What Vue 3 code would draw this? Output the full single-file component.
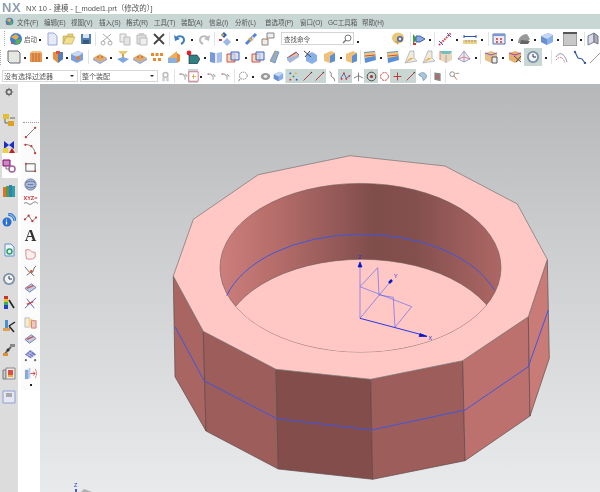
<script setup>
const menus = [
  ['文件(F)', 27], ['编辑(E)', 27], ['视图(V)', 28], ['插入(S)', 27], ['格式(R)', 28],
  ['工具(T)', 27], ['装配(A)', 28], ['信息(I)', 26], ['分析(L)', 30], ['首选项(P)', 35],
  ['窗口(O)', 28], ['GC工具箱', 34], ['帮助(H)', 30],
]

// i = icon id, w = slot width, d = dropdown dot after, s = separator, on = highlighted
const row1a = [
  { i: 'new', w: 17 }, { i: 'open', w: 17 }, { i: 'save', w: 17 }, { s: 1, w: 3 },
  { i: 'cut', w: 19 }, { i: 'copy', w: 17 }, { i: 'paste', w: 17 }, { i: 'x', w: 17 }, { s: 1, w: 5 },
  { i: 'undo', w: 15 }, { d: 1, w: 9 }, { i: 'redo', w: 15 }, { s: 1, w: 6 },
  { i: 'snap', w: 15 }, { d: 1, w: 10 }, { i: 'wrench', w: 17 }, { i: 'boxes', w: 17 },
]
const row1b = [
  { i: 'palette', w: 20 }, { s: 1, w: 3 }, { i: 'play', w: 14 }, { d: 1, w: 7 }, { s: 1, w: 3 },
  { i: 'spring', w: 17 }, { d: 1, w: 8 }, { i: 'ruler', w: 17 }, { d: 1, w: 8 }, { s: 1, w: 4 },
  { i: 'win', w: 18 }, { d: 1, w: 7 }, { i: 'shell', w: 17 }, { d: 1, w: 6 }, { i: 'cube', w: 17 }, { d: 1, w: 6 },
  { i: 'panel', w: 17 }, { d: 1, w: 5 }, { s: 1, w: 3 }, { i: 'cube2', w: 14 },
]
const row2 = [
  { i: 'plane', w: 17 }, { d: 1, w: 6 }, { i: 'block', w: 16 }, { d: 1, w: 6 }, { i: 'cyl', w: 16 }, { d: 1, w: 2 },
  { i: 'cube3', w: 18 }, { s: 1, w: 5 }, { i: 'plate', w: 17 }, { d: 1, w: 6 }, { i: 'pad', w: 17 },
  { i: 'plate', w: 17 }, { i: 'dots', w: 17 }, { i: 'wedge', w: 18 }, { i: 'teal', w: 19 }, { d: 1, w: 5 },
  { i: 'book', w: 17 }, { i: 'frame', w: 18 }, { d: 1, w: 7 }, { i: 'frame', w: 17 }, { i: 'curl', w: 17 },
  { i: 'plate2', w: 19 }, { i: 'cubex', w: 18 }, { i: 'orbox', w: 18 }, { d: 1, w: 5 }, { i: 'orbox', w: 15 }, { s: 1, w: 4 },
  { i: 'tray', w: 16 }, { d: 1, w: 6 }, { i: 'tray', w: 17 }, { i: 'fold', w: 18 }, { i: 'fold', w: 18 }, { i: 'prism', w: 18 },
  { i: 'cone', w: 18 }, { d: 1, w: 6 }, { s: 1, w: 3 }, { i: 'cage', w: 17 }, { d: 1, w: 7 }, { i: 'cage2', w: 18 },
  { i: 'clock', w: 18, on: 1 }, { d: 1, w: 7 }, { s: 1, w: 4 }, { i: 'arc', w: 18 }, { i: 'chain', w: 18 }, { i: 'line', w: 14 },
]
const row3 = [
  { i: 'gear2', w: 10 }, { s: 1, w: 8 }, { i: 'ptr', w: 10 }, { i: 'selbox', w: 10, on: 1 }, { d: 1, w: 6 }, { i: 'ptr', w: 14 }, { i: 'ptr', w: 14 }, { s: 1, w: 4 },
  { i: 'lasso', w: 12 }, { d: 1, w: 10 }, { i: 'disc', w: 14 }, { i: 'cube', w: 12 }, { s: 1, w: 2 },
  { i: 'mesh', w: 15, on: 1 }, { i: 'redline', w: 12, on: 1 }, { i: 'redline', w: 13, on: 1 }, { i: 'wave', w: 12 },
  { i: 'zig', w: 14, on: 1 }, { i: 'tee', w: 12 }, { i: 'target', w: 14, on: 1 }, { i: 'ring', w: 12 },
  { i: 'plus', w: 14, on: 1 }, { i: 'redline', w: 12, on: 1 }, { i: 'blob', w: 13 }, { s: 1, w: 2 },
  { i: 'book2', w: 13 }, { s: 1, w: 3 }, { i: 'key', w: 14 },
]

const tabs = [
  { i: 'gear', h: 16 }, { i: 'tree', h: 40 }, { i: 'bow', h: 13 }, { i: 'parts', h: 25, on: 1 },
  { i: 'books', h: 26 }, { i: 'wifi', h: 32 }, { i: 'doc', h: 28 }, { i: 'clock', h: 30 },
  { i: 'rainbow', h: 18 }, { i: 'bluek', h: 28 }, { i: 'robot', h: 20 }, { i: 'album', h: 28 }, { i: 'disk', h: 18 },
]
const tools = [
  { i: 'rline', h: 12 }, { i: 'rarc', h: 20 }, { i: 'rrect', h: 18 }, { i: 'coil', h: 16 }, { i: 'xyz', h: 18 },
  { i: 'zigr', h: 14 }, { t: 'A', h: 24 }, { i: 'heart', h: 10 }, { i: 'knot', h: 24 }, { i: 'pl1', h: 10 },
  { i: 'pl2', h: 22 }, { i: 'pl3', h: 16 }, { i: 'pl1', h: 16 }, { i: 'gridp', h: 18 }, { i: 'pull', h: 18 },
]

const top = '350,155.7 445,166 517.3,204 547.3,259.3 528.3,316.7 462.7,360.7 370.7,379.3 276,369.3 203.3,331.3 173.3,276 193.3,219.3 258.3,174.7'
const faces = [
  { p: '173.3,276 203.3,331.3 206,431 175,376.7', c: '#a96562' },
  { p: '203.3,331.3 276,369.3 278.3,469 206,431', c: '#9c5d5b' },
  { p: '276,369.3 370.7,379.3 372.7,479.3 278.3,469', c: '#824d4b' },
  { p: '370.7,379.3 462.7,360.7 465,460.7 372.7,479.3', c: '#9c5d5b' },
  { p: '462.7,360.7 528.3,316.7 530,416 465,460.7', c: '#bd716f' },
  { p: '528.3,316.7 547.3,259.3 549.3,358.3 530,416', c: '#c97b78' },
]
const belt = '175,326.7 204.3,381 276.7,418.7 371.7,430 465,410 528.3,366.7 548.3,310'
</script>

<template>
  <div class="app">
    <svg class="sprite" width="0" height="0">
      <defs>
        <symbol id="start" viewBox="0 0 14 14"><circle cx="7" cy="7" r="6" fill="#3f7fd0"/><path d="M2 5l5-3 3 3-3 3z" fill="#e8b040"/><path d="M7 8l5-1-2 5-4 0z" fill="#60b050"/><path d="M2 9l3 3-3 0z" fill="#d05040"/></symbol>
        <symbol id="new" viewBox="0 0 14 14"><path d="M3 1h6l3 3v9H3z" fill="#e6eaf8" stroke="#9aa6d8"/></symbol>
        <symbol id="open" viewBox="0 0 14 14"><path d="M1 12V4h4l1-2h5v3H4z" fill="#e8d070" stroke="#b8a050" stroke-width=".6"/><path d="M1 12l3-7h9l-3 7z" fill="#f0e090" stroke="#b8a050" stroke-width=".6"/></symbol>
        <symbol id="save" viewBox="0 0 14 14"><path d="M2 2h10v10H2z" fill="#4f7fb0"/><path d="M4 2h6v4H4z" fill="#dde6f0"/><path d="M4 8h6v4H4z" fill="#345a80"/></symbol>
        <symbol id="cut" viewBox="0 0 14 14"><path d="M3 2l8 7M11 2L3 9" stroke="#aaa" fill="none"/><circle cx="3" cy="11" r="2" fill="none" stroke="#aaa"/><circle cx="10" cy="11" r="2" fill="none" stroke="#aaa"/></symbol>
        <symbol id="copy" viewBox="0 0 14 14"><path d="M2 2h6v8H2z" fill="#eee" stroke="#bbb"/><path d="M6 5h6v8H6z" fill="#e4e4e4" stroke="#bbb"/></symbol>
        <symbol id="paste" viewBox="0 0 14 14"><path d="M2 3h9v9H2z" fill="#ddd" stroke="#bbb"/><path d="M5 6h7v7H5z" fill="#eee" stroke="#bbb"/><path d="M4 1h5v3H4z" fill="#ccc"/></symbol>
        <symbol id="x" viewBox="0 0 14 14"><path d="M2 2l10 10M12 2L2 12" stroke="#444" stroke-width="1.8"/></symbol>
        <symbol id="undo" viewBox="0 0 14 14"><path d="M3 6c3-3 8-2 8 2 0 2-1 3-3 4" fill="none" stroke="#3f7fc0" stroke-width="2"/><path d="M1 3l1 6 5-2z" fill="#3f7fc0"/></symbol>
        <symbol id="redo" viewBox="0 0 14 14"><path d="M11 6C8 3 3 4 3 8c0 2 1 3 3 4" fill="none" stroke="#bbb" stroke-width="2"/><path d="M13 3l-1 6-5-2z" fill="#bbb"/></symbol>
        <symbol id="snap" viewBox="0 0 14 14"><path d="M6 0l3 3-3 3-3-3z" fill="#3a5fb0"/><path d="M9 6l4 4-4 4-4-4z" fill="#9ab8e8"/><path d="M1 7h3v2H1z" fill="#d04040"/><circle cx="5" cy="3" r="1" fill="#e8b040"/></symbol>
        <symbol id="wrench" viewBox="0 0 14 14"><path d="M2 12L12 2" stroke="#5a80d0" stroke-width="3"/><path d="M5 6l3 3" stroke="#e8b040" stroke-width="2"/><path d="M8 5l2 2" stroke="#ddd" stroke-width="2"/></symbol>
        <symbol id="boxes" viewBox="0 0 14 14"><path d="M6 1h7v5H6z" fill="#eee" stroke="#888"/><path d="M1 7h6v6H1z" fill="#f4ece0" stroke="#888"/><path d="M5 8l2-2" stroke="#e08030"/></symbol>
        <symbol id="palette" viewBox="0 0 14 14"><ellipse cx="6" cy="6" rx="6" ry="5.5" fill="#e8c878"/><circle cx="8" cy="7" r="3" fill="#5060a0"/><circle cx="8" cy="7" r="1.4" fill="#e8e8f8"/><path d="M3 9l3 4 1-4z" fill="#c0a060"/></symbol>
        <symbol id="play" viewBox="0 0 14 14"><path d="M1 2v10l4-5z" fill="#40a040"/><path d="M4 4h4l5 3-5 3H4z" fill="#8aa8e0" stroke="#4060b0"/><path d="M1 11h3v2H1z" fill="#d03030"/></symbol>
        <symbol id="spring" viewBox="0 0 14 14"><path d="M1 13L13 1" stroke="#d04050" stroke-width="2" stroke-dasharray="1.5 1"/><path d="M1 9l4 4M9 1l4 4" stroke="#4060c0"/></symbol>
        <symbol id="ruler" viewBox="0 0 14 14"><path d="M1 3v3M13 3v3M1 4.500h12" stroke="#3050c0"/><path d="M0 8h14v4H0z" fill="#e8d488"/><path d="M3 8v2M6 8v2M9 8v2M12 8v2" stroke="#a88"/></symbol>
        <symbol id="win" viewBox="0 0 14 14"><path d="M1 2h12v10H1z" fill="#e8ecf8" stroke="#5070b8"/><path d="M1 2h12v2H1z" fill="#7898d8"/><path d="M4 6h2v2H4zM8 6h2v2H8zM4 9h2v2H4zM8 9h2v2H8z" fill="#e06050"/></symbol>
        <symbol id="shell" viewBox="0 0 14 14"><path d="M1 11c0-6 5-9 9-9l3 5-5 5z" fill="#999"/><path d="M4 8l9 1-2 3H3z" fill="#666"/></symbol>
        <symbol id="cube" viewBox="0 0 14 14"><path d="M1 4l7-3 5 2v7l-6 3-6-3z" fill="#8ab0e8"/><path d="M1 4l6 3v6l-6-3z" fill="#6a90d0"/><path d="M1 4l7-3 5 2-6 4z" fill="#c4d8f4"/></symbol>
        <symbol id="cube2" viewBox="0 0 14 14"><path d="M2 4l6-3v9l-6 3z" fill="#d8dde8" stroke="#778"/><path d="M8 1l4 3v8l-4-2z" fill="#aab" stroke="#778"/></symbol>
        <symbol id="panel" viewBox="0 0 14 14"><path d="M0 0h14v14H0z" fill="#c8c8c8" stroke="#777"/><path d="M0 0h14v2H0z" fill="#555"/></symbol>
        <symbol id="plane" viewBox="0 0 14 14"><path d="M1 1h10l2 2v10H3l-2-2z" fill="#e4e8e0" stroke="#667"/></symbol>
        <symbol id="block" viewBox="0 0 14 14"><path d="M1 3h12v9H1z" fill="#e89850"/><path d="M4 3v9M7 3v9M10 3v9" stroke="#c06830"/><path d="M1 3l2-2h9l1 2z" fill="#f0c080"/></symbol>
        <symbol id="cyl" viewBox="0 0 14 14"><path d="M2 2h10v7l-5 4-5-4z" fill="#e89040"/><path d="M7 2v11l5-4V2z" fill="#5080c0"/><path d="M5 1h4v3H5z" fill="#e05040"/></symbol>
        <symbol id="cube3" viewBox="0 0 14 14"><path d="M1 4l7-3 5 2v7l-6 3-6-3z" fill="#7aa0e0"/><path d="M1 4l7-3 5 2-6 4z" fill="#c8d8f0"/><circle cx="8" cy="8" r="2" fill="#e08030"/></symbol>
        <symbol id="plate" viewBox="0 0 14 14"><path d="M0 8l7-4 7 4-7 4z" fill="#e0a868"/><path d="M0 8v2l7 4 7-4V8l-7 4z" fill="#9aa8c8"/><circle cx="5" cy="7" r="1" fill="#d07030"/><circle cx="9" cy="7" r="1" fill="#d07030"/></symbol>
        <symbol id="pad" viewBox="0 0 14 14"><path d="M2 1h10l-3 3H5z" fill="#e8c878"/><path d="M6 4h2v5H6z" fill="#e0a040"/><path d="M1 9l6-2 6 2-6 4z" fill="#80a8e0"/></symbol>
        <symbol id="dots" viewBox="0 0 14 14"><path d="M1 3h3v3H1zM5.500 3h3v3h-3zM10 3h3v3h-3zM3 8h3v3H3zM8 8h3v3H8z" fill="#e88a30"/></symbol>
        <symbol id="wedge" viewBox="0 0 14 14"><path d="M1 8l9-7v7z" fill="#e8b060"/><path d="M1 8h9v5H1z" fill="#8ab0e0"/><path d="M10 3l3 2v6l-3 2z" fill="#e88a30"/></symbol>
        <symbol id="teal" viewBox="0 0 14 14"><path d="M3 5h8l3 4-3 5H3z" fill="#2f8080" stroke="#224"  stroke-width=".6"/><circle cx="3" cy="3" r="2.400" fill="#e02030"/></symbol>
        <symbol id="book" viewBox="0 0 14 14"><path d="M1 2l5 1v10l-5-1z" fill="#7898d8"/><path d="M13 2L8 3v10l5-1z" fill="#a8c0e8"/><path d="M6 3h2v10H6z" fill="#e8e8f4"/></symbol>
        <symbol id="frame" viewBox="0 0 14 14"><path d="M1 4h8v8H1z" fill="#f4dcb0" stroke="#d05050"/><path d="M5 2h8v8H5z" fill="#c8d8f4" fill-opacity=".7" stroke="#4060c0"/></symbol>
        <symbol id="curl" viewBox="0 0 14 14"><path d="M7 1l4 1-4 11-5-2z" fill="#8ab0e0" stroke="#5070a0" stroke-width=".6"/><path d="M2 11c4-1 6-4 5-10" fill="none" stroke="#d0a050"/></symbol>
        <symbol id="plate2" viewBox="0 0 14 14"><path d="M1 8l9-6 3 3-9 6z" fill="#f0c0a0" stroke="#5070b0"/><path d="M3 7l8-5" stroke="#d05050"/><path d="M1 8v2l3 3 9-6V5" fill="#a8b8d8"/></symbol>
        <symbol id="cubex" viewBox="0 0 14 14"><path d="M2 5l6-3 5 3v6l-5 3-6-3z" fill="#88b0e8"/><path d="M0 1l7 6M6 1L1 7" stroke="#444"/></symbol>
        <symbol id="orbox" viewBox="0 0 14 14"><path d="M2 4l7-3 4 2v8l-5 2-6-2z" fill="#f0c078"/><path d="M8 6l5-3v8l-5 2z" fill="#5a90d8"/></symbol>
        <symbol id="tray" viewBox="0 0 14 14"><path d="M1 2l11-1 1 9-11 3z" fill="#5a90d8"/><path d="M1 3l11-1v4L2 8z" fill="#f0c878"/><path d="M2 6l10-1" stroke="#d05030"/></symbol>
        <symbol id="fold" viewBox="0 0 14 14"><path d="M7 1l4 0 0 7 3 3-12 2z" fill="#f4ead0" stroke="#90a8d0" stroke-width=".7"/><path d="M2 13l5-5 4 0" fill="#e0b060"/></symbol>
        <symbol id="prism" viewBox="0 0 14 14"><path d="M1 1h12v9l-6 3-6-3z" fill="#e8d8c0"/><path d="M1 1h12l-2 3H3z" fill="#70c0c0"/><path d="M7 5v8" stroke="#aaa"/><path d="M1 10V1" stroke="#e08060"/></symbol>
        <symbol id="cone" viewBox="0 0 14 14"><path d="M7 1l6 8-6 3-6-3z" fill="#e8eef8" stroke="#6888d0" stroke-width=".7"/><path d="M7 1v11M1 9l6-2 6 2" stroke="#e06060" stroke-width=".7" fill="none"/></symbol>
        <symbol id="cage" viewBox="0 0 14 14"><path d="M1 3l6-2 6 2v7l-6 3-6-3z" fill="#e8c088"/><path d="M1 3l6 2 6-2" fill="none" stroke="#8060c0"/><path d="M8 7h5v6H8z" fill="#eee" stroke="#555"/></symbol>
        <symbol id="cage2" viewBox="0 0 14 14"><path d="M1 3l6-2 6 2v7l-6 3-6-3z" fill="#e8b070"/><path d="M1 3l6 2 6-2" fill="none" stroke="#a040c0"/><path d="M6 6l7 6M8 12l5-6" stroke="#555"/></symbol>
        <symbol id="clock" viewBox="0 0 14 14"><circle cx="7" cy="7" r="6" fill="#7b90a8"/><circle cx="7" cy="7" r="4.200" fill="#f2f4f6"/><path d="M7 4v3h3" fill="none" stroke="#334" stroke-width="1"/></symbol>
        <symbol id="arc" viewBox="0 0 14 14"><path d="M1 7c3-5 8-5 11 5" fill="none" stroke="#8090a8"/><path d="M1 10c3-4 7-4 9 3" fill="none" stroke="#d07070" stroke-dasharray="1.500 1"/></symbol>
        <symbol id="chain" viewBox="0 0 14 14"><path d="M2 2l3 6 4 1 3 4" fill="none" stroke="#3a5aa0" stroke-width="1.200"/><circle cx="2" cy="2" r="1.200" fill="#3a5aa0"/><circle cx="12" cy="13" r="1.200" fill="#3a5aa0"/></symbol>
        <symbol id="line" viewBox="0 0 14 14"><path d="M1 13L13 1" stroke="#999"/></symbol>
        <symbol id="gear2" viewBox="0 0 14 14"><circle cx="7" cy="5" r="3" fill="none" stroke="#bbb" stroke-width="2"/><path d="M3 8h3v5H3zM8 8h3v5H8z" fill="#ccc"/></symbol>
        <symbol id="ptr" viewBox="0 0 14 14"><path d="M2 4h4l3 3v4M9 4l3 3" fill="none" stroke="#aaa" stroke-width="1.400"/><circle cx="3" cy="4" r="1" fill="#c88"/></symbol>
        <symbol id="selbox" viewBox="0 0 14 14"><path d="M1 1h12v12H1z" fill="#fff" stroke="#d06070"/><path d="M5 7h5M7 4v6" stroke="#d0a030"/></symbol>
        <symbol id="lasso" viewBox="0 0 14 14"><ellipse cx="8" cy="6" rx="5" ry="4.500" fill="none" stroke="#666" stroke-dasharray="2 1"/><path d="M4 10l-2 3" stroke="#666"/></symbol>
        <symbol id="disc" viewBox="0 0 14 14"><ellipse cx="7" cy="7" rx="6" ry="4.500" fill="#999"/><ellipse cx="7" cy="7" rx="2.500" ry="1.800" fill="#eee"/></symbol>
        <symbol id="mesh" viewBox="0 0 14 14"><circle cx="3" cy="3" r="1.200" fill="#3050c0"/><circle cx="10" cy="3" r="1.200" fill="#e8b030"/><circle cx="7" cy="7" r="1.200" fill="#30a050"/><circle cx="3" cy="11" r="1.200" fill="#d03030"/><circle cx="11" cy="11" r="1.200" fill="#3050c0"/></symbol>
        <symbol id="redline" viewBox="0 0 14 14"><path d="M2 12L12 2" stroke="#c03030" stroke-width="1.200"/><circle cx="12" cy="2" r="1" fill="#444"/></symbol>
        <symbol id="wave" viewBox="0 0 14 14"><path d="M3 1c5 1 0 6 4 7 3 1 2 4 3 5" fill="none" stroke="#555"/></symbol>
        <symbol id="zig" viewBox="0 0 14 14"><path d="M1 9l4-6 3 6 5-3" fill="none" stroke="#5050a0"/><path d="M1 9h2v2H1zM4 2h2v2H4zM7 9h2v2H7zM11 5h2v2h-2z" fill="#d03040"/></symbol>
        <symbol id="tee" viewBox="0 0 14 14"><path d="M7 2v11M1 9l6-3 6 3" fill="none" stroke="#666"/></symbol>
        <symbol id="target" viewBox="0 0 14 14"><circle cx="7" cy="7" r="5.500" fill="none" stroke="#444" stroke-width="1.200"/><circle cx="7" cy="7" r="2" fill="#b03030"/></symbol>
        <symbol id="ring" viewBox="0 0 14 14"><circle cx="7" cy="7" r="5" fill="none" stroke="#d04040" stroke-width="1.200" stroke-dasharray="3 1"/></symbol>
        <symbol id="plus" viewBox="0 0 14 14"><path d="M7 2v10M2 7h10" stroke="#c03030" stroke-width="1.200"/></symbol>
        <symbol id="blob" viewBox="0 0 14 14"><path d="M2 5c2-4 9-4 10 1 0 2-1 5-4 6l-1-4z" fill="#a8c8e0" stroke="#7090a8"/></symbol>
        <symbol id="book2" viewBox="0 0 14 14"><path d="M3 2l8 1v10l-8-2z" fill="#888"/><path d="M5 5l4 1v4l-4-1z" fill="#c06060"/></symbol>
        <symbol id="key" viewBox="0 0 14 14"><circle cx="4" cy="4" r="3" fill="none" stroke="#777"/><path d="M6 6l4 5" stroke="#c04040"/><path d="M8 3h5" stroke="#888"/></symbol>
        <symbol id="gear" viewBox="-3 -3 20 20"><circle cx="7" cy="7" r="3.500" fill="none" stroke="#666" stroke-width="2"/><path d="M7 1v3M7 10v3M1 7h3M10 7h3M3 3l2 2M9 9l2 2M3 11l2-2M9 5l2-2" stroke="#666" stroke-width="1.200"/></symbol>
        <symbol id="tree" viewBox="0 0 14 14"><path d="M1 1h6v5H1z" fill="#e0c030"/><path d="M6 8h6v5H6z" fill="#e0a020"/><path d="M3 6v4h3M8 5h5" stroke="#666" fill="none"/></symbol>
        <symbol id="bow" viewBox="0 0 14 14"><path d="M2 1l5 4 5-4v8l-5-4-5 4z" fill="#1a2fc0"/><path d="M1 8h5v5H1z" fill="#e8d040"/><path d="M7 13l3-5 3 5z" fill="#c02020"/></symbol>
        <symbol id="parts" viewBox="0 0 14 14"><path d="M1 1h7v6H1z" fill="#c888c0" stroke="#806"/><circle cx="10" cy="10" r="3" fill="none" stroke="#a060a0" stroke-width="1.500"/><path d="M4 7v3h3" stroke="#777" fill="none"/></symbol>
        <symbol id="books" viewBox="0 0 14 14"><path d="M1 3h3v10H1z" fill="#e07030"/><path d="M4 2h3v11H4z" fill="#50a040"/><path d="M7 1h3v12H7z" fill="#3080c0"/><path d="M10 2h3v11h-3z" fill="#30a0a0"/></symbol>
        <symbol id="wifi" viewBox="0 0 14 14"><circle cx="5" cy="9" r="4.500" fill="#2a70d0"/><path d="M4.500 6.500v1M4.500 8.500v3" stroke="#fff" stroke-width="1.200"/><path d="M6 2c3 0 6 3 6 6M6 0c4 0 8 4 8 8" fill="none" stroke="#3a80d8" stroke-width="1.300"/></symbol>
        <symbol id="doc" viewBox="0 0 14 14"><path d="M3 1h6l3 3v9H3z" fill="#eef4fc" stroke="#6090d0"/><circle cx="7.500" cy="8.500" r="2.500" fill="none" stroke="#30a060" stroke-width="1.500"/></symbol>
        <symbol id="rainbow" viewBox="0 0 14 14"><path d="M2 0h4v3H2z" fill="#d03030"/><path d="M2 3h4v3H2z" fill="#e8c020"/><path d="M2 6h4v3H2z" fill="#30b050"/><path d="M2 9h4v4H2z" fill="#2040d0"/><path d="M7 4l5 8" stroke="#222" stroke-width="1.600"/></symbol>
        <symbol id="bluek" viewBox="0 0 14 14"><path d="M3 1h3v9H3z" fill="#4a90d0"/><path d="M1 9h7v3H1z" fill="#e0a050"/><path d="M7 7l6-4M7 7l5 6" stroke="#223" stroke-width="1.500"/></symbol>
        <symbol id="robot" viewBox="0 0 14 14"><path d="M2 12l4-5 3-3" stroke="#666" stroke-width="2"/><path d="M8 1h5v3H8z" fill="#888"/><path d="M1 10h5v3H1z" fill="#e09030"/><circle cx="6" cy="7" r="1.500" fill="#333"/></symbol>
        <symbol id="album" viewBox="0 0 14 14"><path d="M1 3h3v9H1z" fill="#ccc" stroke="#777"/><path d="M4 1h9v11H4z" fill="#e8e8e8" stroke="#888"/><path d="M6 3h5v5H6z" fill="#e05040"/><path d="M6 8h5v2H6z" fill="#e8b040"/></symbol>
        <symbol id="disk" viewBox="0 0 14 14"><path d="M1 1h12v12H1z" fill="#e4e8f4" stroke="#90a0d0"/><path d="M4 3h6v4H4z" fill="#aaa"/></symbol>
        <symbol id="rline" viewBox="0 0 14 14"><path d="M2 12L12 2" stroke="#777"/><circle cx="2" cy="12" r="1.200" fill="#d03030"/><circle cx="12" cy="2" r="1.200" fill="#d03030"/></symbol>
        <symbol id="rarc" viewBox="0 0 14 14"><path d="M1 3c5-1 10 3 11 9" fill="none" stroke="#777"/><circle cx="1.500" cy="3" r="1.200" fill="#d03030"/><circle cx="8" cy="4.500" r="1.200" fill="#d03030"/><circle cx="12" cy="12" r="1.200" fill="#d03030"/></symbol>
        <symbol id="rrect" viewBox="0 0 14 14"><path d="M2 3h10v8H2z" fill="none" stroke="#555"/><circle cx="2" cy="3" r="1" fill="#d03030"/><circle cx="12" cy="11" r="1" fill="#d03030"/></symbol>
        <symbol id="coil" viewBox="0 0 14 14"><ellipse cx="7" cy="7" rx="6" ry="6" fill="#a8b8d8" stroke="#6878a0"/><path d="M2 5c3-2 7-2 10 0M2 9c3 2 7 2 10 0M4 7h6" fill="none" stroke="#6878a0"/></symbol>
        <symbol id="zigr" viewBox="0 0 14 14"><path d="M1 9l4-4 4 6 4-4" fill="none" stroke="#777"/><circle cx="1" cy="9" r="1.200" fill="#d03030"/><circle cx="5" cy="5" r="1.200" fill="#d03030"/><circle cx="9" cy="11" r="1.200" fill="#d03030"/><circle cx="13" cy="7" r="1.200" fill="#d03030"/></symbol>
        <symbol id="heart" viewBox="0 0 14 14"><path d="M2 3h4l2 2 4 1v5l-3 2H3l-1-4z" fill="#fbeeee" stroke="#d08888"/></symbol>
        <symbol id="knot" viewBox="0 0 14 14"><path d="M1 3c3 3 3 6 7 6M13 2c-4 3-2 7-5 7M3 12l4-3 4 4" fill="none" stroke="#666"/><circle cx="8" cy="8" r="1.500" fill="#e05030"/></symbol>
        <symbol id="pl1" viewBox="0 0 14 14"><path d="M1 8l7-5 5 4-7 5z" fill="#c0cce0" stroke="#7080a8"/><path d="M3 8l7-3" stroke="#d05050" stroke-width="1.500"/></symbol>
        <symbol id="pl2" viewBox="0 0 14 14"><path d="M1 12L13 1M3 2l8 10" stroke="#5060c8"/><path d="M3 8l7-3" stroke="#d04040" stroke-width="1.500"/></symbol>
        <symbol id="pl3" viewBox="0 0 14 14"><path d="M1 2h5v10H1z" fill="#f0ecd8" stroke="#bbb"/><path d="M5 3h4v9H5z" fill="#f4d890"/><path d="M8 5h5v8H8z" fill="#f0c8c0" stroke="#d08080"/></symbol>
        <symbol id="gridp" viewBox="0 0 14 14"><path d="M1 6l6-5 6 5-6 4z" fill="#7078c8"/><path d="M3 5l6 4M5 3.500l6 4M9 2.500L4 7" stroke="#ccd"/><circle cx="2" cy="12" r="1.200" fill="#666"/><circle cx="12" cy="12" r="1.200" fill="#666"/></symbol>
        <symbol id="pull" viewBox="0 0 14 14"><path d="M1 3h4v10H1z" fill="#88a8d8"/><path d="M5 1h2v11H5z" fill="#c0d0e8"/><path d="M7 7h5M10 5l2 2-2 2" fill="none" stroke="#d04040"/><path d="M12 2c2 3 2 7 0 10" fill="none" stroke="#e08080"/></symbol>
      </defs>
    </svg>

    <div class="title">
      <span class="logo">NX</span>
      <span>NX 10 - 建模 - [_model1.prt（修改的）]</span>
    </div>

    <div class="menu">
      <svg class="menu-ico"><use href="#start"/></svg>
      <span v-for="m in menus" :key="m[0]" class="menu-item" :style="{ width: m[1] + 'px' }">{{ m[0] }}</span>
    </div>

    <div class="bar bar1">
      <i class="grip"></i>
      <svg class="ic"><use href="#start"/></svg>
      <span class="start-txt">启动</span>
      <b class="drop start-drop"></b>
      <template v-for="(it, n) in row1a" :key="n">
        <span class="slot" :class="{ on: it.on }" :style="{ width: it.w + 'px' }">
          <svg v-if="it.i" class="ic"><use :href="'#' + it.i"/></svg>
          <b v-else-if="it.d" class="drop"></b>
          <i v-else class="sep"></i>
        </span>
      </template>
      <div class="search">
        <span>查找命令</span>
        <svg class="lens" viewBox="0 0 10 10"><circle cx="6" cy="4" r="3" fill="none" stroke="#777"/><path d="M4 6L1 9" stroke="#777" stroke-width="1.500"/></svg>
      </div>
      <b class="drop search-drop"></b>
      <template v-for="(it, n) in row1b" :key="'b' + n">
        <span class="slot" :style="{ width: it.w + 'px' }">
          <svg v-if="it.i" class="ic"><use :href="'#' + it.i"/></svg>
          <b v-else-if="it.d" class="drop"></b>
          <i v-else class="sep"></i>
        </span>
      </template>
    </div>

    <div class="bar bar2">
      <i class="grip"></i>
      <template v-for="(it, n) in row2" :key="n">
        <span class="slot" :class="{ on: it.on }" :style="{ width: it.w + 'px' }">
          <svg v-if="it.i" class="ic"><use :href="'#' + it.i"/></svg>
          <b v-else-if="it.d" class="drop"></b>
          <i v-else class="sep"></i>
        </span>
      </template>
    </div>

    <div class="bar bar3">
      <div class="select sel1"><span>没有选择过滤器</span><b class="caret"></b></div>
      <div class="select sel2"><span>整个装配</span><b class="caret"></b></div>
      <template v-for="(it, n) in row3" :key="n">
        <span class="slot small" :class="{ on: it.on }" :style="{ width: it.w + 'px' }">
          <svg v-if="it.i" class="ic"><use :href="'#' + it.i"/></svg>
          <b v-else-if="it.d" class="drop"></b>
          <i v-else class="sep"></i>
        </span>
      </template>
    </div>

    <div class="main">
      <div class="tabs">
        <span v-for="(t, n) in tabs" :key="n" class="tab" :class="{ on: t.on }" :style="{ height: t.h + 'px' }">
          <svg class="ic"><use :href="'#' + t.i"/></svg>
        </span>
      </div>
      <div class="tools">
        <div class="tool-panel">
          <i class="dash"></i>
          <span v-for="(t, n) in tools" :key="n" class="tool" :style="{ height: t.h + 'px' }">
            <span v-if="t.t" class="big-a">{{ t.t }}</span>
            <span v-else-if="t.i === 'xyz'" class="xyz">XYZ=<svg viewBox="0 0 14 4"><path d="M0 2c3-3 5 3 8 0s4-1 6 0" fill="none" stroke="#555" stroke-width=".7"/></svg></span>
            <svg v-else class="ic"><use :href="'#' + t.i"/></svg>
          </span>
          <b class="more"></b>
        </div>
      </div>

      <svg class="view" viewBox="40 84 560 408" width="560" height="408">
        <defs>
          <linearGradient id="bg" x1="0" y1="0" x2="0" y2="1">
            <stop offset="0" stop-color="#b5b7b9"/>
            <stop offset="0.35" stop-color="#c9cbcd"/>
            <stop offset="1" stop-color="#e8eaec"/>
          </linearGradient>
          <linearGradient id="wall" x1="220" y1="0" x2="501" y2="0" gradientUnits="userSpaceOnUse">
            <stop offset="0" stop-color="#cc7f7c"/>
            <stop offset="0.2" stop-color="#b56d6a"/>
            <stop offset="0.55" stop-color="#7f4d4b"/>
            <stop offset="0.7" stop-color="#84504e"/>
            <stop offset="1" stop-color="#ad6764"/>
          </linearGradient>
          <clipPath id="hole"><ellipse cx="360.500" cy="267.700" rx="140.500" ry="84.300"/></clipPath>
        </defs>
        <rect x="40" y="84" width="560" height="408" fill="url(#bg)"/>

        <polygon v-for="f in faces" :key="f.p" :points="f.p" :fill="f.c" stroke="#5f4a4a" stroke-width=".7"/>
        <polyline :points="belt" fill="none" stroke="#3f56e0" stroke-width="1"/>
        <polygon :points="top" fill="#ffc8c5" stroke="#857c7c" stroke-width=".8"/>

        <ellipse cx="360.500" cy="267.700" rx="140.500" ry="84.300" fill="url(#wall)" stroke="#6f5c5c" stroke-width=".6"/>
        <g clip-path="url(#hole)">
          <ellipse cx="361.700" cy="343.300" rx="140.500" ry="84" fill="#ffc8c5" stroke="#6f5c5c" stroke-width=".6"/>
        </g>
        <path d="M226.700 295.700A140.500 84 0 0 1 494.300 290" fill="none" stroke="#3f56e0" stroke-width="1"/>

        <g fill="none" stroke="#6a6cf0" stroke-width=".7">
          <path d="M360 318.300V262"/>
          <path d="M360 318.300L391.700 280"/>
          <path d="M360 286.700L377.700 267.700L379 295L393.300 297.300L395 327.300L411.700 306.700L360 286.700"/>
          <path d="M360 318.300L426.700 336" stroke="#2a35e0" stroke-width="1"/>
          <path d="M360 262l-2 5h4z" fill="#0a14c8" stroke="#0a14c8"/>
          <path d="M427 336.500l-7-3-1 3z" fill="#0a14c8" stroke="#0a14c8"/>
          <path d="M389 283l3-3" stroke="#0a14c8" stroke-width="2.500"/>
        </g>
        <text x="358.500" y="259" class="axis">Z</text>
        <text x="394" y="278" class="axis">Y</text>
        <text x="428.500" y="339.500" class="axis">X</text>

        <text x="74" y="487" class="axis">Z</text>
        <path d="M76 489v3" stroke="#1a2ac0" stroke-width="1.500"/>
        <path d="M81 492l3-3 8 3z" fill="#b0b0b0"/>
      </svg>
    </div>
  </div>
</template>

<style scoped>
.app {
  width: 600px;
  height: 492px;
  overflow: hidden;
  display: flex;
  flex-direction: column;
  background: #fff;
  font-family: "Liberation Sans", "Noto Sans CJK SC", sans-serif;
  color: #444;
  filter: blur(0.3px);
}

.sprite {
  position: absolute;
}

.title {
  height: 14px;
  display: flex;
  align-items: center;
  gap: 4px;
  padding-left: 2px;
  font-size: 7.5px;
  color: #555;
  white-space: nowrap;
}

.logo {
  width: 20px;
  font-size: 13px;
  font-weight: 700;
  color: #8f9fb0;
  letter-spacing: 0.5px;
}

.menu {
  height: 15px;
  display: flex;
  align-items: center;
  padding-left: 5px;
  background: #c8d6d4;
  font-size: 6.5px;
  color: #555;
  white-space: nowrap;
}

.menu-ico {
  width: 9px;
  height: 9px;
  margin-right: 3px;
}

.menu-item {
  flex: none;
}

.bar {
  display: flex;
  align-items: center;
  flex: none;
  background: #fff;
  white-space: nowrap;
}

.bar1 {
  height: 19px;
  padding-left: 4px;
  font-size: 6.5px;
}

.bar2 {
  height: 18px;
  padding-left: 0;
}

.bar3 {
  height: 18px;
  box-sizing: border-box;
  padding: 2px 0 0 2px;
  font-size: 7px;
}

.grip {
  width: 1px;
  height: 15px;
  margin-right: 3px;
  border-left: 1px dotted #aaa;
  flex: none;
}

.slot {
  flex: none;
  height: 18px;
  display: flex;
  align-items: center;
  justify-content: center;
}

.slot.on {
  background: #c8d6d4;
}

.slot.small {
  height: 14px;
}

.ic {
  width: 14px;
  height: 14px;
  flex: none;
}

.slot.small .ic {
  width: 11px;
  height: 11px;
}

.start-txt {
  margin-left: 1px;
  color: #555;
}

.drop {
  width: 2px;
  height: 2px;
  flex: none;
  background: #222;
  margin-top: 2px;
}

.start-drop {
  margin: 2px 2px 0 2px;
}

.sep {
  width: 0;
  height: 14px;
  border-left: 1px solid #dfe4e4;
}

.search {
  width: 73px;
  height: 13px;
  margin-left: 5px;
  box-sizing: border-box;
  border: 1px solid #d4d4d4;
  display: flex;
  align-items: center;
  justify-content: space-between;
  padding: 0 1px 0 2px;
  color: #555;
}

.lens {
  width: 10px;
  height: 10px;
}

.search-drop {
  margin: 6px 30px 0 3px;
}

.select {
  height: 12px;
  box-sizing: border-box;
  border: 1px solid #d8d8d8;
  display: flex;
  align-items: center;
  justify-content: space-between;
  padding: 0 3px 0 1px;
  margin-right: 2px;
  flex: none;
  color: #555;
}

.sel1 {
  width: 76px;
}

.sel2 {
  width: 78px;
}

.caret {
  border: 2px solid transparent;
  border-top: 2.5px solid #222;
  border-bottom: 0;
}

.main {
  flex: 1;
  display: flex;
  min-height: 0;
}

.tabs {
  width: 18px;
  flex: none;
  background: #dcdcdc;
  display: flex;
  flex-direction: column;
}

.tab {
  display: flex;
  align-items: center;
  justify-content: center;
  flex: none;
}

.tab.on {
  background: #fff;
  margin-left: 2px;
  padding-right: 2px;
}

.tools {
  width: 22px;
  flex: none;
  background: #fff;
  padding: 36px 0 0 3px;
  box-sizing: border-box;
}

.tool-panel {
  width: 19px;
  height: 270px;
  background: #fbfbfb;
  display: flex;
  flex-direction: column;
  align-items: center;
}

.dash {
  width: 16px;
  height: 0;
  margin: 2px 0 3px;
  border-top: 1px dotted #999;
  flex: none;
}

.tool {
  display: flex;
  align-items: center;
  justify-content: center;
  flex: none;
  width: 100%;
}

.tool .ic {
  width: 13px;
  height: 13px;
}

.big-a {
  font-family: "Liberation Serif", serif;
  font-size: 16px;
  font-weight: 700;
  line-height: 1;
  color: #333;
}

.xyz {
  display: flex;
  flex-direction: column;
  align-items: center;
  font-size: 5.5px;
  font-weight: 700;
  color: #c83030;
  line-height: 1;
}

.xyz svg {
  width: 14px;
  height: 5px;
}

.more {
  width: 2px;
  height: 2px;
  margin-top: 2px;
  background: #222;
}

.view {
  flex: none;
  display: block;
}

.axis {
  font-family: "Liberation Sans", sans-serif;
  font-size: 5.5px;
  fill: #2a35d0;
}
</style>

<style>
html, body {
  background: #fff;
  overflow: hidden;
}
</style>
